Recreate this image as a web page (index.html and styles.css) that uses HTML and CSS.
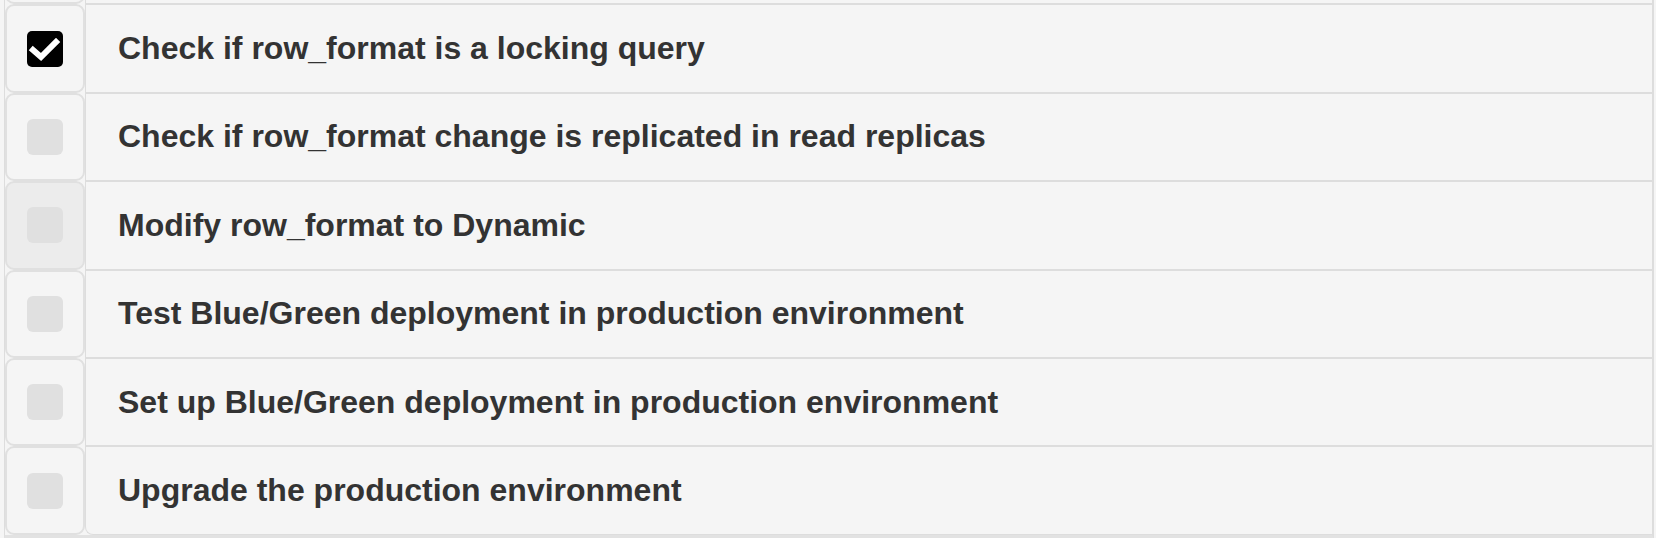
FILE: index.html
```html
<!DOCTYPE html>
<html>
<head>
<meta charset="utf-8">
<link rel="stylesheet" href="styles.css">
</head>
<body>
<div class="list">
  <div class="row">
    <div class="check-cell"><span class="box"></span></div>
    <div class="label"></div>
  </div>
  <div class="row">
    <div class="check-cell"><span class="box checked"><svg viewBox="0 0 36 36" width="36" height="36"><polyline points="6,19 14,26 29,11" fill="none" stroke="#fff" stroke-width="6" stroke-linecap="square" stroke-linejoin="miter"/></svg></span></div>
    <div class="label">Check if row_format is a locking query</div>
  </div>
  <div class="row">
    <div class="check-cell"><span class="box"></span></div>
    <div class="label">Check if row_format change is replicated in read replicas</div>
  </div>
  <div class="row">
    <div class="check-cell hover"><span class="box"></span></div>
    <div class="label">Modify row_format to Dynamic</div>
  </div>
  <div class="row">
    <div class="check-cell"><span class="box"></span></div>
    <div class="label">Test Blue/Green deployment in production environment</div>
  </div>
  <div class="row">
    <div class="check-cell"><span class="box"></span></div>
    <div class="label">Set up Blue/Green deployment in production environment</div>
  </div>
  <div class="row">
    <div class="check-cell"><span class="box"></span></div>
    <div class="label last">Upgrade the production environment</div>
  </div>
</div>
</body>
</html>
```
FILE: styles.css
```css
html, body {
  margin: 0;
  padding: 0;
  background: #f5f5f5;
  overflow: hidden;
}
body {
  font-family: "Liberation Sans", Arial, sans-serif;
}
.list {
  margin: -84px 2px 0 4px;
  border-left: 1px solid #dddddd;
  border-right: 2px solid #dddddd;
  border-bottom: 4px solid #e2e2e2;
  background: #f5f5f5;
}
.row {
  display: flex;
  height: 88.4px;
}
.check-cell {
  box-sizing: border-box;
  width: 80px;
  flex: none;
  border: 2px solid #e0e0e0;
  border-radius: 9px;
  background: #f5f5f5;
  display: flex;
  align-items: center;
  justify-content: center;
}
.check-cell.hover {
  background: #ececec;
}
.box {
  width: 36px;
  height: 36px;
  border-radius: 6px;
  background: #e0e0e0;
  display: block;
}
.box.checked {
  background: #000;
  border-radius: 5px;
}
.box svg {
  display: block;
}
.label {
  box-sizing: border-box;
  flex: 1;
  border-top: 1px solid #dddddd;
  border-bottom: 1px solid #dddddd;
  border-left: 1px solid #dddddd;
  display: flex;
  align-items: center;
  padding-left: 32px;
  font-size: 32px;
  font-weight: bold;
  color: #333333;
}
.label.last {
  border-bottom-left-radius: 8px;
}
```
